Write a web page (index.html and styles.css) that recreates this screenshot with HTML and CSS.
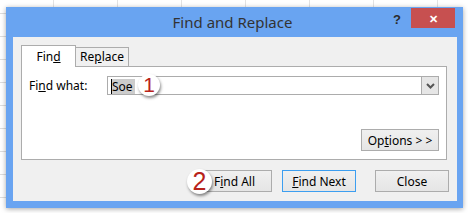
FILE: index.html
```html
<!DOCTYPE html>
<html lang="en">
<head>
    <meta charset="UTF-8">
    <title>Find and Replace</title>
    <link rel="stylesheet" href="styles.css">
</head>
<body>
    <div class="window">
        <div class="titlebar">
            <span class="title">Find and Replace</span>
            <span class="help">?</span>
            <span class="close-x">&#x2715;</span>
        </div>
        <div class="client">
            <div class="tabs">
                <div class="tab active">Fin<u>d</u></div>
                <div class="tab">Re<u>p</u>lace</div>
            </div>
            <div class="panel">
                <div class="find-row">
                    <label class="label">Fi<u>n</u>d what:</label>
                    <div class="combo">
                        <span class="value"><span class="selected">Soe</span></span>
                        <span class="drop">
                            <svg width="9" height="6" viewBox="0 0 9 6"><path d="M1 1 L4.5 4.5 L8 1" fill="none" stroke="#555" stroke-width="2"/></svg>
                        </span>
                    </div>
                    <span class="badge badge-one">1</span>
                </div>
                <div class="options-row">
                    <button class="btn options">Op<u>t</u>ions &gt; &gt;</button>
                </div>
            </div>
            <div class="actions">
                <span class="badge badge-two">2</span>
                <button class="btn find-all">F<u>i</u>nd All</button>
                <button class="btn find-next default"><u>F</u>ind Next</button>
                <button class="btn close">Close</button>
            </div>
        </div>
    </div>
</body>
</html>
```

FILE: styles.css
```css
body {
    margin: 0;
    width: 468px;
    height: 213px;
    overflow: hidden;
    font-family: "Noto Sans", "Open Sans", sans-serif;
    background-color: #ffffff;
    background-image:
        repeating-linear-gradient(90deg, transparent 0, transparent 52px, #e3e3e3 52px, #e3e3e3 53px, transparent 53px, transparent 64px),
        repeating-linear-gradient(180deg, transparent 0, transparent 12px, #dddddd 12px, #dddddd 13px, transparent 13px, transparent 23px);
    background-size: 100% 7px, 6px 100%;
    background-repeat: repeat-x, repeat-y;
    background-position: 1px 0, 0 1px;
    padding-top: 7px;
    padding-left: 6px;
    box-sizing: border-box;
}
.window {
    width: 457px;
    height: 201px;
    background-color: #69a4f1;
    box-shadow: 0 1px 5px rgba(0, 0, 0, 0.35);
    display: flex;
    flex-direction: column;
}
.titlebar {
    position: relative;
    height: 30px;
    display: flex;
    align-items: center;
    justify-content: center;
}
.title {
    font-size: 15px;
    color: #333333;
    margin-left: -4px;
}
.help {
    position: absolute;
    left: 387px;
    top: 5px;
    font-family: "Liberation Sans", Arial, sans-serif;
    font-weight: bold;
    font-size: 13px;
    color: #2b2b2b;
}
.close-x {
    position: absolute;
    left: 405px;
    top: 1px;
    width: 44px;
    height: 20px;
    background-color: #c75050;
    color: #ffffff;
    font-size: 11px;
    font-weight: bold;
    display: flex;
    align-items: center;
    justify-content: center;
}
.client {
    flex: 1;
    margin: 0 6px 7px 7px;
    background-color: #f0f0f0;
    padding: 8px 9px 0 8px;
    font-size: 12px;
    color: #000000;
}
.tabs {
    display: flex;
    align-items: flex-end;
    height: 21px;
    position: relative;
    z-index: 1;
}
.tab {
    height: 19px;
    width: 53px;
    border: 1px solid #acacac;
    border-bottom: none;
    border-left: none;
    box-sizing: border-box;
    background-color: #f0f0f0;
    text-align: center;
    line-height: 18px;
}
.tab.active {
    height: 22px;
    width: 55px;
    border-left: 1px solid #acacac;
    background-color: #ffffff;
    margin-bottom: -1px;
    line-height: 22px;
}
.panel {
    width: 426px;
    height: 94px;
    box-sizing: border-box;
    border: 1px solid #acacac;
    background-color: #ffffff;
    padding: 9px 7px 8px 7px;
    display: flex;
    flex-direction: column;
}
.find-row {
    position: relative;
    display: flex;
    align-items: center;
    height: 19px;
}
.label {
    width: 78px;
    flex-shrink: 0;
}
.combo {
    flex: 1;
    height: 19px;
    box-sizing: border-box;
    border: 1px solid #acacac;
    display: flex;
    align-items: stretch;
}
.value {
    flex: 1;
    padding: 1px 0 0 3px;
    display: flex;
    align-items: center;
}
.selected {
    background-color: #cccccc;
    border-left: 1px solid #000000;
    padding: 0 2px 0 0;
    line-height: 15px;
}
.drop {
    width: 16px;
    background-color: #e6e6e6;
    border-left: 1px solid #acacac;
    display: flex;
    align-items: center;
    justify-content: center;
}
.options-row {
    margin-top: auto;
    display: flex;
    justify-content: flex-end;
}
.btn {
    font-family: "Noto Sans", "Open Sans", sans-serif;
    font-size: 12px;
    color: #000000;
    height: 22px;
    width: 75px;
    padding: 0;
    border: 1px solid #acacac;
    background: linear-gradient(#f0f0f0, #e5e5e5);
}
.options {
    width: 78px;
}
.btn.default {
    border-color: #3c9ef0;
}
.actions {
    position: relative;
    display: flex;
    justify-content: flex-end;
    margin-top: 10px;
    margin-right: -1px;
}
.find-all {
    margin-right: 10px;
}
.find-next {
    width: 74px;
    margin-right: 19px;
}
.close {
    width: 74px;
}
.badge {
    position: absolute;
    border-radius: 50%;
    background-color: #ffffff;
    box-shadow: 1px 2px 3px rgba(0, 0, 0, 0.45);
    color: #b8231b;
    font-family: "Liberation Sans", Arial, sans-serif;
    display: flex;
    align-items: center;
    justify-content: center;
}
.badge-one {
    left: 109px;
    top: -2px;
    width: 22px;
    height: 22px;
    font-size: 21px;
}
.badge-two {
    left: 166px;
    top: -1px;
    width: 25px;
    height: 25px;
    font-size: 25px;
}
```
